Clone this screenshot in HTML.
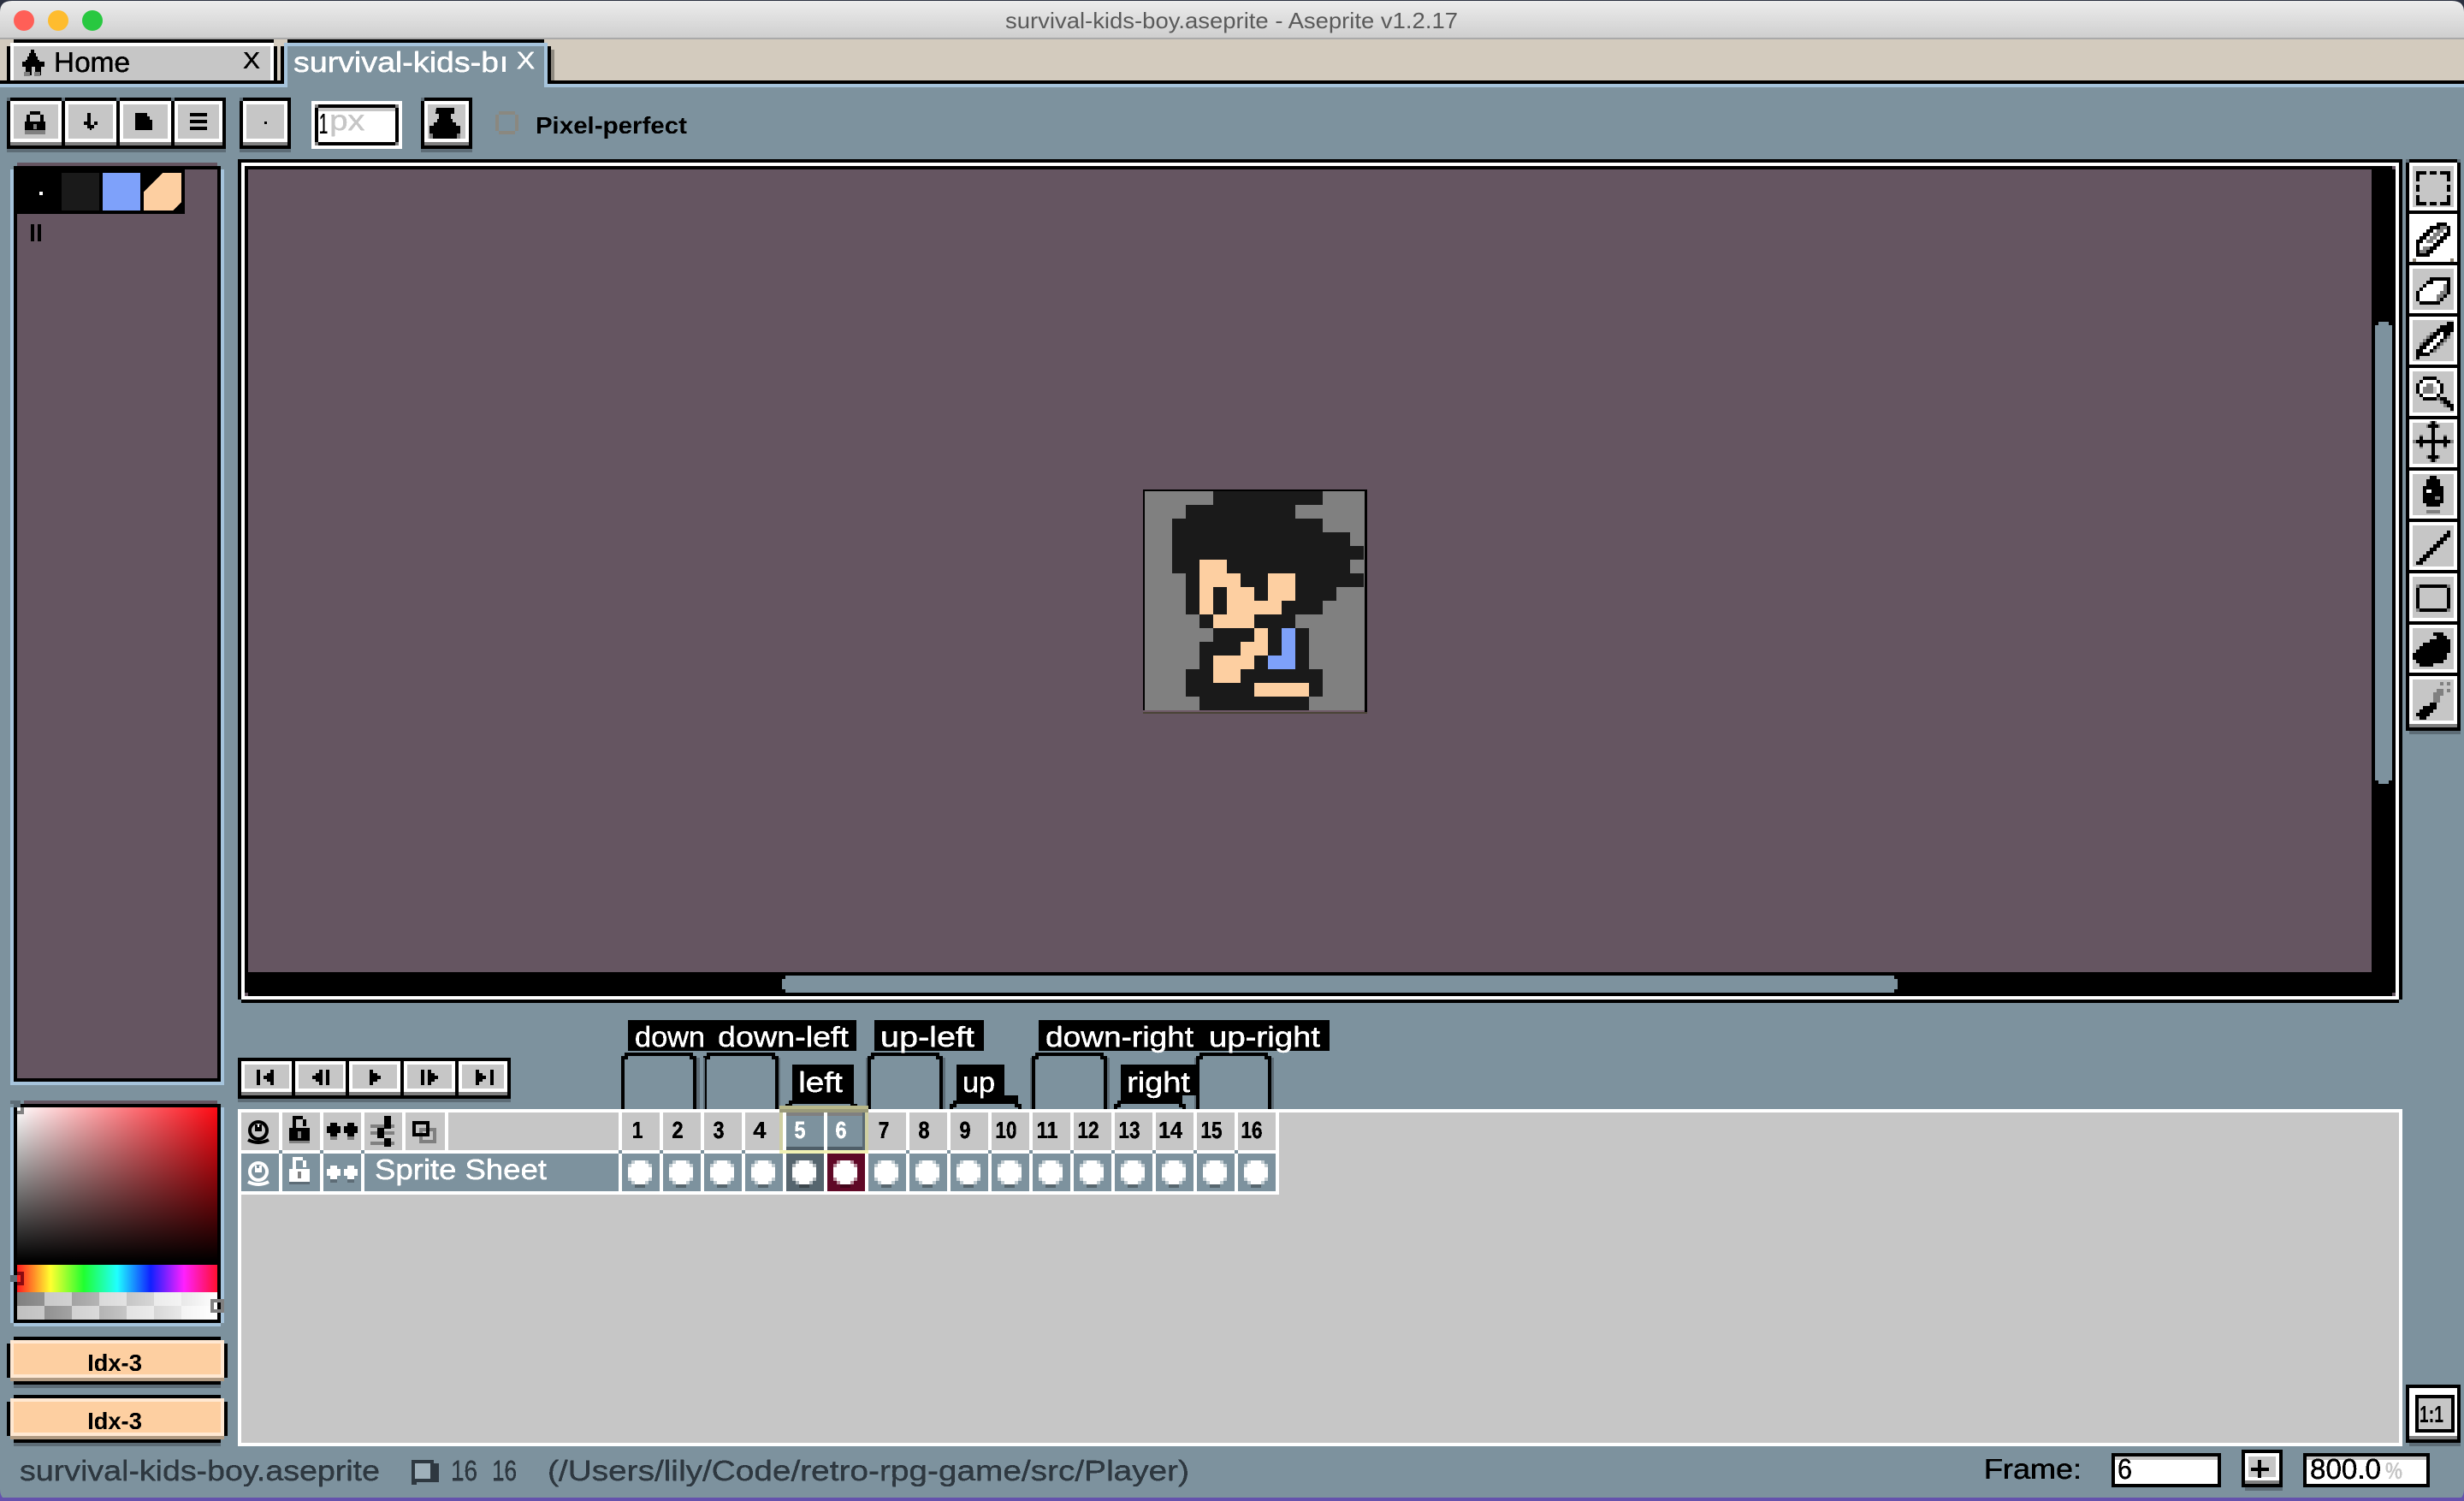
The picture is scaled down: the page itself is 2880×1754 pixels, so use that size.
<!DOCTYPE html>
<html><head><meta charset="utf-8"><title>survival-kids-boy.aseprite - Aseprite v1.2.17</title>
<style>
html,body{margin:0;padding:0;width:2880px;height:1754px;overflow:hidden;background:#7d929e}
svg{display:block}
text{font-family:"Liberation Sans",sans-serif;white-space:pre}
.r{font-size:33px}
.b{font-size:28px;font-weight:bold}
</style></head><body>
<svg xmlns="http://www.w3.org/2000/svg" width="2880" height="1754" viewBox="0 0 2880 1754" shape-rendering="crispEdges">
<defs>
<linearGradient id="tg" x1="0" y1="0" x2="0" y2="1"><stop offset="0" stop-color="#ececec"/><stop offset="1" stop-color="#cfcfcf"/></linearGradient>
<linearGradient id="wh" x1="0" y1="0" x2="1" y2="0"><stop offset="0" stop-color="#fff"/><stop offset="1" stop-color="#fff" stop-opacity="0"/></linearGradient>
<linearGradient id="bk" x1="0" y1="0" x2="0" y2="1"><stop offset="0" stop-color="#000" stop-opacity="0"/><stop offset="1" stop-color="#000"/></linearGradient>
<linearGradient id="hue" x1="0" y1="0" x2="1" y2="0"><stop offset="0" stop-color="#ff1a20"/><stop offset=".167" stop-color="#ffff30"/><stop offset=".333" stop-color="#20ff30"/><stop offset=".5" stop-color="#20ffff"/><stop offset=".667" stop-color="#1020ff"/><stop offset=".833" stop-color="#ff20ff"/><stop offset="1" stop-color="#ff1030"/></linearGradient>
<linearGradient id="al" x1="0" y1="0" x2="1" y2="0"><stop offset="0" stop-color="#fff" stop-opacity="0"/><stop offset="1" stop-color="#fff"/></linearGradient>
<filter id="crisp" x="-5%" y="-20%" width="110%" height="140%" color-interpolation-filters="sRGB"><feComponentTransfer><feFuncA type="discrete" tableValues="0 1"/></feComponentTransfer></filter>
<g id="tb"><rect y="60" width="68" height="4" fill="#5d6c76"/><rect width="68" height="60" fill="#000"/><rect x="4" y="4" width="60" height="48" fill="#fff"/><rect x="4" y="52" width="60" height="4" fill="#808080"/><rect x="8" y="8" width="52" height="40" fill="#c6c6c6"/><rect width="4" height="4" fill="#5d6c76"/><rect x="64" width="4" height="4" fill="#5d6c76"/></g>
<g id="pb"><rect y="48" width="68" height="4" fill="#5d6c76"/><rect width="68" height="48" fill="#000"/><rect x="4" y="4" width="60" height="36" fill="#fff"/><rect x="4" y="40" width="60" height="4" fill="#808080"/><rect x="8" y="8" width="52" height="28" fill="#c6c6c6"/></g>
<g id="c"><path d="M8 28h12v4h-12z" fill="#000" fill-opacity=".3"/><path d="M8 0h12v4h4v4h4v12h-4v4h-4v4h-12v-4h-4v-4h-4v-12h4v-4h4z" fill="#fff"/><path d="M4 0h4v4h-4zM20 0h4v4h-4zM0 4h4v4h-4zM24 4h4v4h-4zM0 20h4v4h-4zM24 20h4v4h-4zM4 24h4v4h-4zM20 24h4v4h-4z" fill="#fff" fill-opacity=".55"/></g>
</defs>

<!-- window -->
<rect width="2880" height="1754" fill="#7d929e"/>
<rect x="0" y="1750" width="2880" height="4" fill="#6552ad"/>
<path d="M0 1740v14h14q-14 0-14-14zM2880 1740v14h-14q14 0 14-14z" fill="#6552ad" shape-rendering="auto"/>

<!-- title bar -->
<rect width="2880" height="46" fill="#2b3040"/>
<path d="M14 1H2866Q2880 1 2880 14V44H0V14Q0 1 14 1Z" fill="url(#tg)" shape-rendering="auto"/>
<rect y="44" width="2880" height="2" fill="#a9a9a9"/>
<g shape-rendering="auto">
<circle cx="28" cy="24" r="12" fill="#ff5f57"/><circle cx="68" cy="24" r="12" fill="#febc2e"/><circle cx="108" cy="24" r="12" fill="#28c840"/>
<text x="1175" y="33" font-size="26" fill="#5a5a5a" textLength="529" lengthAdjust="spacingAndGlyphs">survival-kids-boy.aseprite - Aseprite v1.2.17</text>
</g>

<!-- tab bar -->
<rect y="46" width="2880" height="48" fill="#d3cbbe"/>
<rect y="94" width="2880" height="4" fill="#000"/>
<rect y="98" width="2880" height="4" fill="#a6c4dc"/>
<!-- home tab -->
<rect x="16" y="46" width="304" height="4" fill="#000"/>
<rect x="8" y="54" width="4" height="40" fill="#000"/><rect x="320" y="54" width="4" height="40" fill="#000"/>
<rect x="12" y="50" width="308" height="44" fill="#fff"/>
<rect x="16" y="54" width="300" height="40" fill="#c6c6c6"/>
<path d="M36 58h4v4h2v4h2v4h2v2h6v6h-4v10h-7v-10h-4v10h-7v-10h-4v-6h4v-2h2v-4h2v-4h2z" fill="#000"/>
<rect x="28" y="84" width="7" height="5" fill="#808080"/><rect x="40" y="84" width="7" height="5" fill="#808080"/>
<!-- active tab -->
<rect x="336" y="46" width="300" height="4" fill="#000"/>
<rect x="328" y="54" width="4" height="44" fill="#000"/><rect x="640" y="54" width="4" height="44" fill="#000"/>
<rect x="644" y="58" width="4" height="36" fill="#8f8a80"/>
<rect x="332" y="50" width="308" height="52" fill="#a6c4dc"/>
<rect x="336" y="54" width="300" height="48" fill="#7d929e"/>

<g filter="url(#crisp)">
<g stroke-width=".5">
<text class="r" x="63" y="84" fill="#000" stroke="#000" textLength="89" lengthAdjust="spacingAndGlyphs">Home</text>
<text class="r" x="343" y="84" fill="#fff" stroke="#fff" textLength="240" lengthAdjust="spacingAndGlyphs">survival-kids-b</text>
<text class="r" x="284" y="80" fill="#000" stroke="#000" textLength="20" lengthAdjust="spacingAndGlyphs" style="font-size:28px">X</text>
<text class="r" x="604" y="80" fill="#fff" stroke="#fff" textLength="21" lengthAdjust="spacingAndGlyphs" style="font-size:28px">X</text>
</g>
</g>
<rect x="587" y="66" width="4" height="18" fill="#fff"/>

<!-- toolbar -->
<use href="#tb" x="8" y="114"/><use href="#tb" x="72" y="114"/><use href="#tb" x="136" y="114"/><use href="#tb" x="200" y="114"/>
<rect x="264" y="114" width="6" height="64" fill="#7d929e"/>
<rect x="260" y="114" width="4" height="60" fill="#000"/>
<rect x="256" y="118" width="4" height="48" fill="#fff"/><rect x="256" y="166" width="4" height="4" fill="#808080"/><rect x="256" y="174" width="8" height="4" fill="#5d6c76"/>
<use href="#tb" x="280" y="114"/><rect x="340" y="114" width="10" height="64" fill="#7d929e"/><rect x="336" y="114" width="4" height="60" fill="#000"/><rect x="332" y="118" width="4" height="48" fill="#fff"/><rect x="332" y="166" width="4" height="4" fill="#808080"/><rect x="336" y="174" width="4" height="4" fill="#5d6c76"/>
<use href="#tb" x="492" y="114"/><rect x="552" y="114" width="10" height="64" fill="#7d929e"/><rect x="548" y="114" width="4" height="60" fill="#000"/><rect x="544" y="118" width="4" height="48" fill="#fff"/><rect x="544" y="166" width="4" height="4" fill="#808080"/><rect x="548" y="174" width="4" height="4" fill="#5d6c76"/>
<!-- toolbar icons -->
<path d="M35 130h12v4h4v8h2v10h-24v-10h2v-8h4zM35 134v8h12v-8z" fill="#000" fill-rule="evenodd"/>
<rect x="39" y="145" width="4" height="6" fill="#808080"/><rect x="29" y="152" width="24" height="5" fill="#808080"/>
<path d="M102 132h4v14h4v-4h4v4h-4v4h-3v2h-2v-2h-3v-4h-4v-4h4v4h0z" fill="#000"/>
<path d="M158 132h14v4h3v4h3v12h-20z" fill="#000"/>
<path d="M222 132h20v4h-20zM222 140h20v4h-20zM222 148h20v4h-20z" fill="#000"/>
<rect x="309" y="142" width="3" height="3" fill="#000"/>
<path d="M510 126h21v7h-4v6h2v4h4v4h5v15h-36v-15h5v-4h4v-4h2v-6h-4z" fill="#000"/>
<rect x="502" y="156" width="4" height="6" fill="#808080"/><rect x="534" y="156" width="4" height="6" fill="#808080"/>
<!-- 1px input -->
<rect x="364" y="118" width="106" height="56" fill="#fff"/>
<rect x="368" y="122" width="98" height="48" fill="#000"/>
<rect x="372" y="126" width="90" height="40" fill="#fff"/><rect x="372" y="126" width="90" height="4" fill="#c6c6c6"/>
<rect x="368" y="122" width="4" height="4" fill="#808080"/><rect x="462" y="122" width="4" height="4" fill="#808080"/><rect x="368" y="166" width="4" height="4" fill="#808080"/><rect x="462" y="166" width="4" height="4" fill="#808080"/>
<!-- checkbox -->
<path d="M583 130h19v4h4v19h-4v4h-19v-4h-4v-19h4zM583 134v19h19v-19z" fill="#8a8880" fill-rule="evenodd"/>
<g filter="url(#crisp)">
<text class="b" x="626" y="156" fill="#000" textLength="177" lengthAdjust="spacingAndGlyphs">Pixel-perfect</text>
<text class="r" x="373" y="156" fill="#000" stroke="#000" stroke-width=".5" textLength="10" lengthAdjust="spacingAndGlyphs">1</text>
<text class="r" x="385" y="152" fill="#c6c6c6" stroke="#c6c6c6" stroke-width=".5" textLength="41" lengthAdjust="spacingAndGlyphs">px</text>
</g>

<!-- palette panel -->
<rect x="20" y="190" width="234" height="4" fill="#655561"/>
<rect x="12" y="198" width="4" height="1070" fill="#a6c4dc"/><rect x="258" y="198" width="4" height="1070" fill="#a6c4dc"/>
<rect x="16" y="1264" width="242" height="4" fill="#a6c4dc"/>
<rect x="16" y="194" width="242" height="1070" fill="#000"/>
<rect x="20" y="198" width="234" height="1062" fill="#655561"/>
<rect x="16" y="194" width="200" height="56" fill="#000"/>
<rect x="46" y="224" width="4" height="4" fill="#fff"/>
<rect x="72" y="202" width="44" height="44" fill="#1a1a1a"/>
<rect x="120" y="202" width="44" height="44" fill="#7ea1fa"/>
<path d="M190 202H212V236L202 246H168V224Z" fill="#fdcfa1"/>
<rect x="36" y="262" width="4" height="20" fill="#000"/><rect x="44" y="262" width="4" height="20" fill="#000"/>

<!-- color selector -->
<rect x="28" y="1286" width="226" height="4" fill="#655561"/>
<rect x="12" y="1294" width="4" height="252" fill="#a6c4dc"/><rect x="258" y="1294" width="4" height="252" fill="#a6c4dc"/>
<rect x="16" y="1546" width="242" height="4" fill="#a6c4dc"/>
<rect x="16" y="1290" width="242" height="256" fill="#000"/>
<rect x="20" y="1294" width="234" height="180" fill="#ff0a14"/>
<rect x="20" y="1294" width="234" height="180" fill="url(#wh)"/>
<rect x="20" y="1294" width="234" height="180" fill="url(#bk)"/>
<rect x="20" y="1478" width="234" height="32" fill="url(#hue)"/>
<path d="M20 1510h32v16h-32zM84 1510h32v16h-32zM148 1510h32v16h-32zM212 1510h42v16h-42zM52 1526h32v16h-32zM116 1526h32v16h-32zM180 1526h32v16h-32z" fill="#808080"/>
<path d="M52 1510h32v16h-32zM116 1510h32v16h-32zM180 1510h32v16h-32zM20 1526h32v16h-32zM84 1526h32v16h-32zM148 1526h32v16h-32zM212 1526h42v16h-42z" fill="#c0c0c0"/>
<rect x="20" y="1510" width="234" height="32" fill="url(#al)"/>
<rect x="16" y="1290" width="8" height="4" fill="#5d6c76"/><rect x="12" y="1286" width="12" height="4" fill="#5d6c76"/>
<rect x="20" y="1294" width="8" height="8" fill="#808080"/><rect x="20" y="1294" width="4" height="4" fill="#fff"/>
<rect x="12" y="1490" width="8" height="8" fill="#5d6c76"/>
<path d="M20 1486h8v16h-8zM20 1490v8h4v-8z" fill="#8a0a10" fill-rule="evenodd"/>
<path d="M246 1518h16v16h-16zM250 1522v8h8v-8z" fill="#808080" fill-rule="evenodd"/>

<!-- Idx buttons -->
<g>
<rect x="16" y="1618" width="242" height="4" fill="#5d6c76"/>
<path d="M16 1562H258V1566H262V1570H266V1610H262V1614H258V1618H16V1614H12V1610H8V1570H12V1566H16Z" fill="#000"/>
<rect x="12" y="1566" width="250" height="44" fill="#ffe8d2"/>
<rect x="12" y="1610" width="250" height="4" fill="#b09a82"/>
<rect x="16" y="1570" width="242" height="36" fill="#fdcfa1"/>
<rect x="16" y="1686" width="242" height="4" fill="#5d6c76"/>
<path d="M16 1630H258V1634H262V1638H266V1678H262V1682H258V1686H16V1682H12V1678H8V1638H12V1634H16Z" fill="#000"/>
<rect x="12" y="1634" width="250" height="44" fill="#ffe8d2"/>
<rect x="12" y="1678" width="250" height="4" fill="#b09a82"/>
<rect x="16" y="1638" width="242" height="36" fill="#fdcfa1"/>
</g>
<g filter="url(#crisp)">
<text class="b" x="102" y="1602" fill="#000" textLength="64" lengthAdjust="spacingAndGlyphs">Idx-3</text>
<text class="b" x="102" y="1670" fill="#000" textLength="64" lengthAdjust="spacingAndGlyphs">Idx-3</text>
</g>

<!-- editor -->
<rect x="278" y="186" width="2530" height="986" fill="#000"/>
<rect x="2804" y="1168" width="4" height="4" fill="#7d929e"/>
<rect x="278" y="1168" width="4" height="4" fill="#7d929e"/>
<rect x="282" y="190" width="2522" height="978" fill="#fff"/>
<rect x="286" y="194" width="2514" height="970" fill="#000"/>
<rect x="290" y="198" width="2482" height="938" fill="#655561"/>
<rect x="2796" y="194" width="4" height="4" fill="#655561"/><rect x="286" y="1160" width="4" height="4" fill="#655561"/><rect x="2796" y="1160" width="4" height="4" fill="#655561"/>
<path d="M2780 376h12v4h4v532h-4v4h-12v-4h-4v-532h4z" fill="#7d929e"/>
<path d="M918 1140h1296v4h4v12h-4v4h-1296v-4h-4v-12h4z" fill="#7d929e"/>

<!-- sprite -->
<rect x="1336" y="572" width="262" height="262" fill="#000"/>
<rect x="1338" y="574" width="257" height="258" fill="#808080"/>
<rect x="1336" y="830" width="259" height="2" fill="#6f5a68"/><rect x="1336" y="832" width="262" height="2" fill="#4a4436"/>
<g transform="translate(1338 574) scale(16)">
<path fill="#1a1a1a" d="M5 0h8v1h-8zM3 1h8v1h-8zM2 2h11v1h-11zM2 3h13v1h-13zM2 4h14v1h-14zM2 5h13v1h-13zM3 6h13v1h-13zM3 7h11v1h-11zM3 8h10v1h-10zM4 9h7v1h-7zM5 10h7v1h-7zM4 11h8v1h-8zM4 12h8v1h-8zM3 13h10v1h-10zM3 14h10v1h-10zM4 15h8v1h-8z"/>
<path fill="#fdcfa1" d="M4 5h2v1h-2zM4 6h3v1h-3zM9 6h2v1h-2zM4 7h1v1h-1zM6 7h2v1h-2zM9 7h2v1h-2zM4 8h1v1h-1zM6 8h4v1h-4zM5 9h3v1h-3zM8 10h1v1h-1zM7 11h2v1h-2zM5 12h3v1h-3zM5 13h2v1h-2zM8 14h4v1h-4z"/>
<path fill="#7ea1fa" d="M10 10h1v1h-1zM10 11h1v1h-1zM9 12h2v1h-2z"/>
</g>

<!-- tools -->
<rect x="2812" y="186" width="64" height="668" fill="#000"/>
<rect x="2816" y="854" width="60" height="4" fill="#5d6c76"/>
<rect x="2812" y="186" width="4" height="4" fill="#5d6c76"/><rect x="2872" y="186" width="4" height="4" fill="#5d6c76"/>
<g fill="#fff">
<rect x="2816" y="190" width="56" height="56"/><rect x="2816" y="250" width="56" height="56"/><rect x="2816" y="310" width="56" height="56"/><rect x="2816" y="370" width="56" height="56"/><rect x="2816" y="430" width="56" height="56"/><rect x="2816" y="490" width="56" height="56"/><rect x="2816" y="550" width="56" height="56"/><rect x="2816" y="610" width="56" height="56"/><rect x="2816" y="670" width="56" height="56"/><rect x="2816" y="730" width="56" height="56"/><rect x="2816" y="790" width="56" height="60"/>
</g>
<rect x="2816" y="846" width="56" height="4" fill="#808080"/>
<g fill="#c6c6c6">
<rect x="2820" y="194" width="48" height="48"/><rect x="2820" y="314" width="48" height="48"/><rect x="2820" y="374" width="48" height="48"/><rect x="2820" y="434" width="48" height="48"/><rect x="2820" y="494" width="48" height="48"/><rect x="2820" y="554" width="48" height="48"/><rect x="2820" y="614" width="48" height="48"/><rect x="2820" y="674" width="48" height="48"/><rect x="2820" y="734" width="48" height="48"/><rect x="2820" y="794" width="48" height="48"/>
</g>
<rect x="2820" y="302" width="4" height="4" fill="#8a8070"/><rect x="2864" y="302" width="4" height="4" fill="#8a8070"/>
<!-- select -->
<path transform="translate(2824 200) scale(4)" fill="#000" d="M0 0h3v1h-3zM4 0h2v1h-2zM7 0h3v1h-3zM0 1h1v2h-1zM9 1h1v2h-1zM0 4h1v2h-1zM9 4h1v2h-1zM0 7h1v2h-1zM9 7h1v2h-1zM0 9h3v1h-3zM4 9h2v1h-2zM7 9h3v1h-3z"/>
<!-- pencil -->
<path transform="translate(2824 260) scale(4)" fill="#000" d="M6 0h3v1h-3zM4 1h3v1h-3zM9 1h1v1h-1zM3 2h2v1h-2zM9 2h1v1h-1zM2 3h2v1h-2zM8 3h2v1h-2zM1 4h2v1h-2zM7 4h2v1h-2zM0 5h2v1h-2zM6 5h2v1h-2zM0 6h1v3h-1zM5 6h2v1h-2zM4 7h2v1h-2zM3 8h2v1h-2zM0 9h4v1h-4z"/>
<path transform="translate(2824 260) scale(4)" fill="#808080" d="M7 1h2v1h-2zM6 2h2v1h-2zM5 3h2v1h-2zM4 4h2v1h-2zM3 5h2v1h-2zM2 7h2v1h-2zM1 8h2v1h-2z"/>
<!-- eraser -->
<path transform="translate(2824 324) scale(4)" fill="#000" d="M4 0h6v1h-6zM3 1h2v1h-2zM9 1h1v2h-1zM2 2h1v1h-1zM1 3h1v1h-1zM0 4h1v3h-1zM9 3h1v2h-1zM8 5h1v1h-1zM7 6h1v1h-1zM1 7h6v1h-6z"/>
<path transform="translate(2824 324) scale(4)" fill="#fff" d="M5 1h4v1h-4zM3 2h5v1h-5zM2 3h6v1h-6zM1 4h6v1h-6zM1 5h5v1h-5zM1 6h5v1h-5z"/>
<path transform="translate(2824 324) scale(4)" fill="#808080" d="M8 2h1v1h-1zM8 3h1v1h-1zM7 4h2v1h-2zM6 5h2v1h-2zM6 6h1v1h-1z"/>
<!-- eyedropper -->
<path transform="translate(2824 376) scale(4)" fill="#000" d="M9 0h2v1h-2zM7 1h4v1h-4zM6 2h5v1h-5zM5 3h2v1h-2zM8 3h2v1h-2zM4 4h2v1h-2zM8 4h1v1h-1zM3 5h2v1h-2zM7 5h1v1h-1zM2 6h2v1h-2zM6 6h1v1h-1zM1 7h2v1h-2zM5 7h1v1h-1zM0 8h2v1h-2zM4 8h1v1h-1zM0 9h4v1h-4zM0 10h1v1h-1z"/>
<path transform="translate(2824 376) scale(4)" fill="#fff" d="M7 3h1v1h-1zM6 4h2v1h-2zM5 5h2v1h-2zM4 6h2v1h-2zM3 7h2v1h-2zM2 8h2v1h-2z"/>
<path transform="translate(2824 376) scale(4)" fill="#808080" d="M4 3h1v1h-1zM3 4h1v1h-1zM2 5h1v1h-1zM1 6h1v1h-1zM9 4h1v1h-1zM8 5h1v1h-1zM7 6h1v1h-1zM6 7h1v1h-1zM5 8h1v1h-1z"/>
<!-- zoom -->
<path transform="translate(2824 440) scale(4)" fill="#000" d="M2 0h4v1h-4zM1 1h1v1h-1zM6 1h1v1h-1zM0 2h1v3h-1zM7 2h1v3h-1zM1 5h1v1h-1zM6 5h1v1h-1zM2 6h4v1h-4zM7 6h2v1h-2zM8 7h2v1h-2zM9 8h2v1h-2zM10 9h1v1h-1z"/>
<path transform="translate(2824 440) scale(4)" fill="#fff" d="M2 1h4v1h-4zM1 2h2v1h-2zM5 2h2v1h-2zM1 3h1v2h-1zM6 3h1v2h-1zM2 5h4v1h-4z"/>
<path transform="translate(2824 440) scale(4)" fill="#808080" d="M3 2h2v1h-2zM2 3h3v2h-3zM6 6h1v1h-1zM7 7h1v1h-1zM8 8h1v1h-1z"/>
<!-- move -->
<path transform="translate(2820 492) scale(4)" fill="#808080" d="M5 0h2v1h-2zM4 1h4v1h-4zM4 10h4v1h-4zM5 11h2v1h-2zM0 5.5h1v1h-1zM11 5.5h1v1h-1zM2 4h1v4h-1zM9 4h1v4h-1z"/>
<path transform="translate(2820 492) scale(4)" fill="#000" d="M5.5 0h1v12h-1zM1 5.5h10v1h-10zM4.5 1h3v1h-3zM4.5 10h3v1h-3zM2 4.5h1v3h-1zM9 4.5h1v3h-1z"/>
<!-- bucket -->
<path transform="translate(2832 556) scale(4)" fill="#000" d="M2 0h2v1h-2zM1 1h4v1h-4zM1 2h4v1h-4zM0 3h6v5h-6zM1 8h4v1h-4z"/>
<rect x="2836" y="572" width="6" height="4" fill="#fff"/><rect x="2846" y="580" width="6" height="4" fill="#808080"/>
<rect x="2836" y="596" width="16" height="4" fill="#808080"/>
<!-- line -->
<path transform="translate(2824 620) scale(4)" fill="#000" d="M9 0h1v1h-1zM8 1h2v1h-2zM7 2h2v1h-2zM6 3h2v1h-2zM5 4h2v1h-2zM4 5h2v1h-2zM3 6h2v1h-2zM2 7h2v1h-2zM1 8h2v1h-2zM0 9h2v1h-2z"/>
<!-- rect -->
<path fill="#000" fill-rule="evenodd" d="M2824 683h40v32h-40zM2828 687v24h32v-24z"/>
<rect x="2824" y="683" width="4" height="4" fill="#808080"/><rect x="2860" y="683" width="4" height="4" fill="#808080"/><rect x="2824" y="711" width="4" height="4" fill="#808080"/><rect x="2860" y="711" width="4" height="4" fill="#808080"/>
<!-- contour -->
<path transform="translate(2820 739) scale(4)" fill="#000" d="M6 0h3v1h-3zM7 1h3v1h-3zM8 2h3v1h-3zM5 2h3v1h-3zM3 3h8v1h-8zM2 4h9v1h-9zM1 5h10v1h-10zM0 6h10v2h-10zM1 8h8v1h-8zM2 9h4v1h-4z"/>
<!-- spray -->
<path transform="translate(2824 797) scale(4)" fill="#000" d="M4 6h2v1h-2zM2 7h4v1h-4zM1 8h4v1h-4zM0 9h4v1h-4zM1 10h2v1h-2z"/>
<path transform="translate(2824 797) scale(4)" fill="#808080" d="M7 0h1v1h-1zM9 0h1v1h-1zM6 2h2v1h-2zM9 2h1v1h-1zM5 3h3v1h-3zM5 4h2v1h-2zM5 5h2v1h-2z"/>

<!-- playback -->
<use href="#pb" x="278" y="1236"/><use href="#pb" x="341" y="1236"/><use href="#pb" x="404" y="1236"/><use href="#pb" x="468" y="1236"/><use href="#pb" x="532" y="1236"/>
<rect x="597" y="1236" width="4" height="52" fill="#7d929e"/>
<rect x="593" y="1236" width="4" height="48" fill="#000"/>
<rect x="589" y="1240" width="4" height="36" fill="#fff"/><rect x="589" y="1276" width="4" height="4" fill="#808080"/><rect x="593" y="1284" width="4" height="4" fill="#5d6c76"/>
<path d="M300 1250h4v18h-4zM316 1250h4v18h-4zM312 1254h4v10h-4zM308 1257h4v4h-4z" fill="#000"/>
<path d="M365 1257h4v4h-4zM369 1254h4v10h-4zM373 1250h4v18h-4zM381 1250h4v18h-4z" fill="#000"/>
<path d="M432 1250h4v18h-4zM436 1254h5v10h-5zM441 1257h4v4h-4z" fill="#000"/>
<path d="M492 1250h4v18h-4zM500 1250h4v18h-4zM504 1254h4v10h-4zM508 1257h4v4h-4z" fill="#000"/>
<path d="M556 1250h4v18h-4zM560 1254h4v10h-4zM564 1257h4v4h-4zM573 1250h4v18h-4z" fill="#000"/>

<!-- timeline -->
<rect x="278" y="1296" width="2530" height="394" fill="#fff"/>
<rect x="282" y="1300" width="2522" height="386" fill="#c6c6c6"/>
<!-- tag brackets -->
<g fill="none" stroke="#000" stroke-width="4">
<path d="M728 1296V1236H732V1232H808V1236H812V1296"/>
<path d="M824 1296V1236H828V1232H904V1236H908V1296"/>
<path d="M1016 1296V1236H1020V1232H1096V1236H1100V1296"/>
<path d="M1208 1296V1236H1212V1232H1288V1236H1292V1296"/>
<path d="M1400 1296V1236H1404V1232H1480V1236H1484V1296"/>
<path d="M920 1296V1292H924V1288H996V1292H1000V1296"/>
<path d="M1112 1296V1292H1116V1288H1188V1292H1192V1296"/>
<path d="M1304 1296V1292H1308V1288H1380V1292H1384V1296"/>
</g>
<g fill="#5d6c76">
<rect x="814" y="1236" width="4" height="60"/><rect x="822" y="1236" width="2" height="60"/><rect x="910" y="1236" width="2" height="60"/>
<rect x="1012" y="1236" width="2" height="60"/><rect x="1102" y="1236" width="3" height="60"/>
<rect x="1204" y="1236" width="2" height="60"/><rect x="1294" y="1236" width="3" height="60"/>
<rect x="1396" y="1236" width="2" height="60"/><rect x="1486" y="1236" width="3" height="60"/>
</g>
<g fill="#000">
<rect x="734" y="1192" width="267" height="36"/>
<rect x="1022" y="1192" width="128" height="36"/>
<rect x="1214" y="1192" width="340" height="36"/>
<rect x="926" y="1244" width="72" height="44"/>
<rect x="1118" y="1244" width="56" height="36"/><rect x="1118" y="1280" width="72" height="8"/>
<rect x="1310" y="1244" width="88" height="36"/><rect x="1310" y="1280" width="72" height="8"/>
</g>
<!-- row 2 -->
<rect x="282" y="1348" width="1210" height="44" fill="#7d929e"/>
<rect x="278" y="1344" width="1216" height="4" fill="#fff"/>
<rect x="278" y="1392" width="1216" height="4" fill="#fff"/>
<rect x="916" y="1348" width="48" height="44" fill="#56656e"/>
<rect x="964" y="1348" width="48" height="44" fill="#5f0826"/>
<!-- selected header -->
<rect x="916" y="1300" width="96" height="44" fill="#7d929e"/>
<rect x="916" y="1300" width="96" height="4" fill="#808080"/>
<rect x="916" y="1340" width="96" height="4" fill="#4f5e68"/>
<rect x="1008" y="1300" width="4" height="44" fill="#5b6a73"/>
<!-- vertical seps -->
<path fill="#fff" d="M326 1300h4v92h-4zM374 1300h4v92h-4zM422 1300h4v92h-4zM470 1300h4v44h-4zM520 1300h4v44h-4zM723 1300h4v92h-4zM771 1300h4v92h-4zM819 1300h4v92h-4zM867 1300h4v92h-4zM915 1300h4v92h-4zM963 1300h4v92h-4zM1011 1300h4v92h-4zM1059 1300h4v92h-4zM1107 1300h4v92h-4zM1155 1300h4v92h-4zM1203 1300h4v92h-4zM1251 1300h4v92h-4zM1299 1300h4v92h-4zM1347 1300h4v92h-4zM1395 1300h4v92h-4zM1443 1300h4v92h-4zM1491 1300h4v96h-4z"/>
<path fill="#7d929e" d="M326 1344h4v4h-4zM374 1344h4v4h-4zM422 1344h4v4h-4zM723 1344h4v4h-4zM771 1344h4v4h-4zM819 1344h4v4h-4zM867 1344h4v4h-4zM1059 1344h4v4h-4zM1107 1344h4v4h-4zM1155 1344h4v4h-4zM1203 1344h4v4h-4zM1251 1344h4v4h-4zM1299 1344h4v4h-4zM1347 1344h4v4h-4zM1395 1344h4v4h-4zM1443 1344h4v4h-4z"/>
<!-- yellow selection -->
<rect x="911" y="1292" width="104" height="4" fill="#b8b88a"/>
<rect x="911" y="1296" width="4" height="52" fill="#cfcfa2"/><rect x="1011" y="1296" width="4" height="52" fill="#cfcfa2"/>
<rect x="911" y="1296" width="104" height="4" fill="#9a9a7a"/>
<rect x="911" y="1344" width="104" height="4" fill="#f2f2b4"/>
<!-- cels -->
<use href="#c" x="734" y="1356"/><use href="#c" x="782" y="1356"/><use href="#c" x="830" y="1356"/><use href="#c" x="878" y="1356"/><use href="#c" x="926" y="1356"/><use href="#c" x="974" y="1356"/><use href="#c" x="1022" y="1356"/><use href="#c" x="1070" y="1356"/><use href="#c" x="1118" y="1356"/><use href="#c" x="1166" y="1356"/><use href="#c" x="1214" y="1356"/><use href="#c" x="1262" y="1356"/><use href="#c" x="1310" y="1356"/><use href="#c" x="1358" y="1356"/><use href="#c" x="1406" y="1356"/><use href="#c" x="1454" y="1356"/>
<!-- header icons -->
<g shape-rendering="auto" fill="none" stroke="#000" stroke-width="4">
<circle cx="302" cy="1321" r="10"/><path d="M290 1332q12 6 24 0"/>
</g>
<rect x="298" y="1314" width="8" height="8" fill="#000"/><rect x="301" y="1314" width="2" height="3" fill="#fff"/>
<path d="M342 1304h12v4h4v8h-4v-8h-8v10h16v15h-24v-15h4z" fill="#000"/><rect x="348" y="1322" width="4" height="8" fill="#808080"/><rect x="338" y="1333" width="24" height="3" fill="#808080"/>
<path d="M386 1312h8v4h4v8h-4v4h-8v-4h-4v-8h4zM406 1312h8v4h4v8h-4v4h-8v-4h-4v-8h4z" fill="#000"/>
<path d="M386 1328h8v4h-8zM406 1328h8v4h-8z" fill="#808080"/>
<path d="M433 1314h28v4h-28zM433 1322h28v4h-28zM433 1334h28v4h-28z" fill="#808080"/>
<path d="M449 1304h8v15h-8zM441 1318h8v12h-8zM449 1330h8v10h-8z" fill="#000"/>
<path d="M490 1318h20v18h-20zM494 1322v10h12v-10z" fill="#808080" fill-rule="evenodd"/>
<path d="M482 1310h20v18h-20zM486 1314v10h12v-10z" fill="#000" fill-rule="evenodd"/>
<!-- row2 icons -->
<g shape-rendering="auto" fill="none" stroke="#fff" stroke-width="4">
<circle cx="302" cy="1369" r="10"/><path d="M290 1381q12 6 24 0"/>
</g>
<rect x="298" y="1362" width="8" height="8" fill="#fff"/><rect x="300" y="1362" width="3" height="3" fill="#7d929e"/>
<path d="M342 1352h12v4h4v8h-4v-8h-8v10h16v15h-24v-15h4z" fill="#fff"/><rect x="348" y="1369" width="4" height="8" fill="#808080"/><rect x="338" y="1381" width="24" height="3" fill="#5d6c76"/>
<path d="M386 1362h8v4h4v8h-4v4h-8v-4h-4v-8h4zM406 1362h8v4h4v8h-4v4h-8v-4h-4v-8h4z" fill="#fff"/>
<path d="M386 1378h8v4h-8zM406 1378h8v4h-8z" fill="#5d6c76"/>

<!-- bottom bar -->
<path d="M481 1706h26v4h6v22h-26v3h-6zM485 1710v18h18v-18z" fill="#2e3840" fill-rule="evenodd"/>
<rect x="485" y="1710" width="18" height="18" fill="#9fb0ba"/>
<rect x="2468" y="1698" width="128" height="40" fill="#000"/><rect x="2472" y="1702" width="120" height="32" fill="#fff"/><rect x="2472" y="1702" width="120" height="4" fill="#c6c6c6"/>
<rect x="2692" y="1698" width="148" height="40" fill="#000"/><rect x="2696" y="1702" width="140" height="32" fill="#fff"/><rect x="2696" y="1702" width="140" height="4" fill="#c6c6c6"/>
<rect x="2624" y="1738" width="44" height="4" fill="#5d6c76"/>
<rect x="2620" y="1694" width="48" height="44" fill="#000"/>
<rect x="2624" y="1698" width="40" height="32" fill="#fff"/><rect x="2624" y="1730" width="40" height="4" fill="#808080"/>
<rect x="2628" y="1702" width="32" height="24" fill="#c6c6c6"/>
<path d="M2639 1706h4v9h9v4h-9v8h-4v-8h-8v-4h8z" fill="#000"/>
<rect x="2816" y="1686" width="60" height="4" fill="#5d6c76"/>
<rect x="2812" y="1618" width="64" height="68" fill="#000"/>
<rect x="2816" y="1622" width="56" height="56" fill="#fff"/><rect x="2816" y="1678" width="56" height="4" fill="#808080"/>
<rect x="2823" y="1630" width="46" height="44" fill="#000"/><rect x="2827" y="1634" width="38" height="36" fill="#c6c6c6"/>

<g filter="url(#crisp)">
<g fill="#000" stroke="#000" stroke-width=".4">
<text class="b" x="745" y="1330" text-anchor="middle" textLength="13" lengthAdjust="spacingAndGlyphs">1</text>
<text class="b" x="792" y="1330" text-anchor="middle" textLength="13" lengthAdjust="spacingAndGlyphs">2</text>
<text class="b" x="840" y="1330" text-anchor="middle" textLength="13" lengthAdjust="spacingAndGlyphs">3</text>
<text class="b" x="888" y="1330" text-anchor="middle" textLength="15" lengthAdjust="spacingAndGlyphs">4</text>
<text class="b" x="1033" y="1330" text-anchor="middle" textLength="13" lengthAdjust="spacingAndGlyphs">7</text>
<text class="b" x="1080" y="1330" text-anchor="middle" textLength="13" lengthAdjust="spacingAndGlyphs">8</text>
<text class="b" x="1128" y="1330" text-anchor="middle" textLength="13" lengthAdjust="spacingAndGlyphs">9</text>
<text class="b" x="1176" y="1330" text-anchor="middle" textLength="25" lengthAdjust="spacingAndGlyphs">10</text>
<text class="b" x="1224" y="1330" text-anchor="middle" textLength="25" lengthAdjust="spacingAndGlyphs">11</text>
<text class="b" x="1272" y="1330" text-anchor="middle" textLength="25" lengthAdjust="spacingAndGlyphs">12</text>
<text class="b" x="1320" y="1330" text-anchor="middle" textLength="25" lengthAdjust="spacingAndGlyphs">13</text>
<text class="b" x="1368" y="1330" text-anchor="middle" textLength="28" lengthAdjust="spacingAndGlyphs">14</text>
<text class="b" x="1416" y="1330" text-anchor="middle" textLength="25" lengthAdjust="spacingAndGlyphs">15</text>
<text class="b" x="1463" y="1330" text-anchor="middle" textLength="25" lengthAdjust="spacingAndGlyphs">16</text>
</g>
<g fill="#fff" stroke="#fff" stroke-width=".4">
<text class="b" x="935" y="1330" text-anchor="middle" textLength="13" lengthAdjust="spacingAndGlyphs">5</text>
<text class="b" x="983" y="1330" text-anchor="middle" textLength="13" lengthAdjust="spacingAndGlyphs">6</text>
</g>
<g fill="#fff" stroke="#fff" stroke-width=".5">
<text class="r" x="742" y="1223" textLength="82" lengthAdjust="spacingAndGlyphs">down</text>
<text class="r" x="839" y="1223" textLength="153" lengthAdjust="spacingAndGlyphs">down-left</text>
<text class="r" x="1029" y="1223" textLength="110" lengthAdjust="spacingAndGlyphs">up-left</text>
<text class="r" x="1222" y="1223" textLength="173" lengthAdjust="spacingAndGlyphs">down-right</text>
<text class="r" x="1413" y="1223" textLength="130" lengthAdjust="spacingAndGlyphs">up-right</text>
<text class="r" x="933" y="1276" textLength="52" lengthAdjust="spacingAndGlyphs">left</text>
<text class="r" x="1125" y="1276" textLength="38" lengthAdjust="spacingAndGlyphs">up</text>
<text class="r" x="1317" y="1276" textLength="74" lengthAdjust="spacingAndGlyphs">right</text>
<text class="r" x="438" y="1378" textLength="201" lengthAdjust="spacingAndGlyphs">Sprite Sheet</text>
</g>
<g fill="#2e3840" stroke="#2e3840" stroke-width=".4">
<text class="r" x="23" y="1730" textLength="421" lengthAdjust="spacingAndGlyphs">survival-kids-boy.aseprite</text>
<text class="r" x="527" y="1730" textLength="31" lengthAdjust="spacingAndGlyphs">16</text>
<text class="r" x="575" y="1730" textLength="29" lengthAdjust="spacingAndGlyphs">16</text>
<text class="r" x="640" y="1730" textLength="750" lengthAdjust="spacingAndGlyphs">(/Users/lily/Code/retro-rpg-game/src/Player)</text>
</g>
<g fill="#000" stroke="#000" stroke-width=".5">
<text class="r" x="2319" y="1728" textLength="114" lengthAdjust="spacingAndGlyphs">Frame:</text>
<text class="r" x="2475" y="1728" textLength="17" lengthAdjust="spacingAndGlyphs">6</text>
<text class="r" x="2700" y="1728" textLength="83" lengthAdjust="spacingAndGlyphs">800.0</text>
</g>
<text class="b" x="2828" y="1662" fill="#000" textLength="28" lengthAdjust="spacingAndGlyphs">1:1</text>
<text class="b" x="2788" y="1728" fill="#c6c6c6" textLength="20" lengthAdjust="spacingAndGlyphs">%</text>
</g>
</svg>
</body></html>
